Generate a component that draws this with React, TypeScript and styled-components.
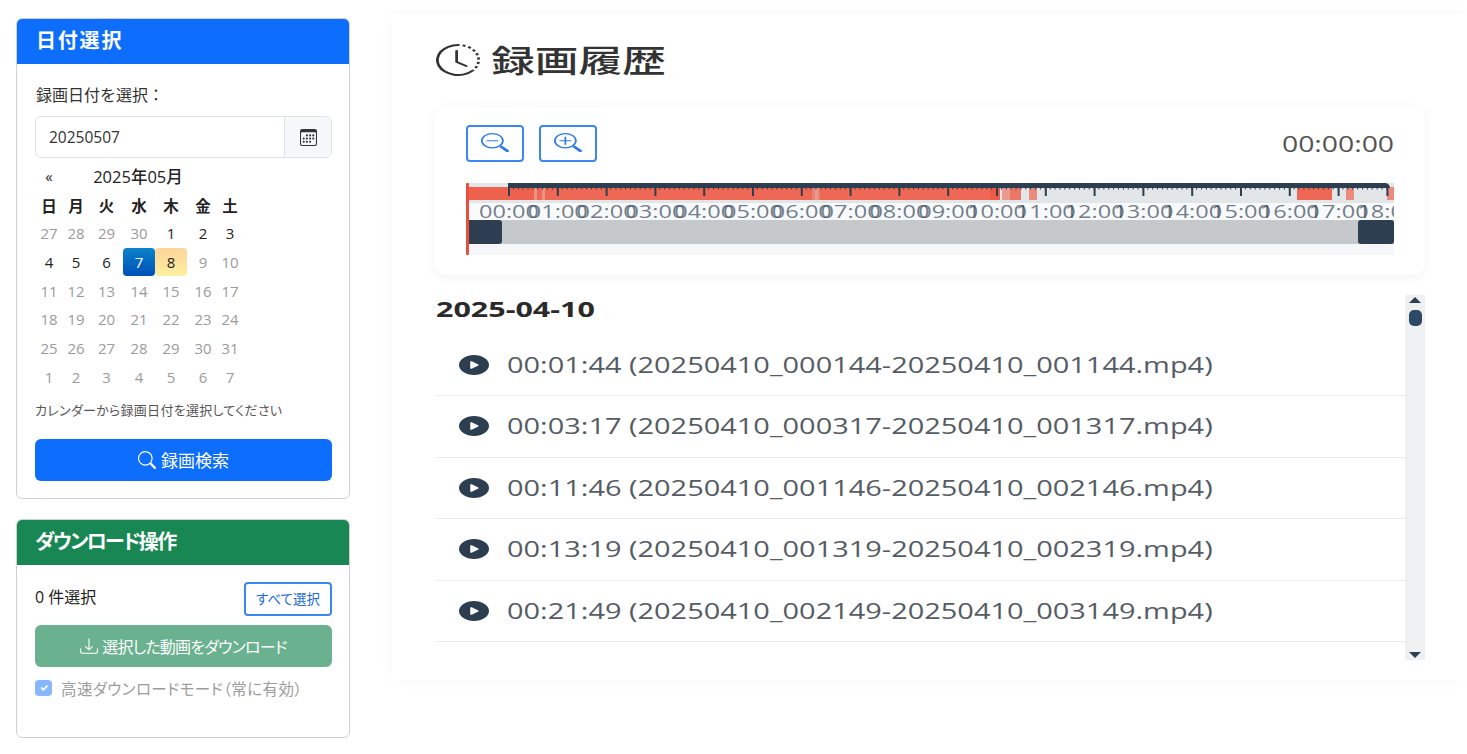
import React from "react";
import styled, { createGlobalStyle } from "styled-components";
import { BsCalendar3, BsClockHistory, BsDownload, BsPlayCircleFill, BsSearch, BsZoomIn, BsZoomOut } from "react-icons/bs";

const Global = createGlobalStyle`
  html, body { margin: 0; padding: 0; background: #fff; }
  body { font-family: "Open Sans", "Noto Sans CJK JP", sans-serif; color: #212529; overflow: hidden; }
`;

const Page = styled.div`
  display: flex; align-items: flex-start; width: 1467px; height: 754px; overflow: hidden;
`;
const Sidebar = styled.aside`
  display: flex; flex-direction: column; gap: 20px; width: 334px; flex: none; padding: 18px 0 0 16px;
`;
const Card = styled.section<{ $height: number }>`
  box-sizing: border-box; height: ${p => p.$height}px; border: 1px solid #cfd1d3; border-radius: 6px; overflow: hidden; background: #fff;
`;
const CardHeader = styled.h2<{ $bg: string; $inset: number; $spacing: number }>`
  margin: 0; height: 45px; box-sizing: border-box; padding-left: ${p => p.$inset}px; background: ${p => p.$bg}; color: #fff;
  font-size: 20px; line-height: 44px; font-weight: 700; font-feature-settings: "palt"; letter-spacing: ${p => p.$spacing}px;
`;
const CardBody = styled.div`
  padding: 0 17px 0 18px; display: flex; flex-direction: column;
`;
const FieldLabel = styled.label`
  margin-top: 19px; height: 24px; line-height: 24px; font-size: 16px; color: #333; padding-left: 1px;
`;
const InputGroup = styled.div`
  display: flex; margin-top: 9px; height: 42px; box-sizing: border-box; border: 1px solid #dee2e6; border-radius: 6px; overflow: hidden;
`;
const DateInput = styled.div`
  flex: 1; padding-left: 13px; font-size: 15.5px; line-height: 41px; color: #333;
`;
const Addon = styled.div`
  width: 46px; display: flex; align-items: center; justify-content: center; background: #f6f7f8; border-left: 1px solid #dee2e6; color: #333;
`;
const Calendar = styled.div`
  display: grid; grid-template-columns: 26px 28px 33px 32px 32px 32px 22px; grid-auto-rows: 28.7px; margin-top: 4px; margin-left: 1px; width: 205px;
`;
const MonthNav = styled.div`
  display: flex; align-items: center; justify-content: center; font-size: 15px; color: #222;
`;
const MonthTitle = styled(MonthNav)`
  grid-column: 2 / 8; font-size: 16.5px; font-weight: 500; padding-right: 27px;
`;
const Weekday = styled.div`
  display: flex; align-items: center; justify-content: center; font-size: 15.5px; font-weight: 600; color: #222;
`;
const Day = styled.div<{ $tone?: "muted" | "active" | "today" }>`
  display: flex; align-items: center; justify-content: center; font-size: 15px; border-radius: 4px; height: 28px;
  color: ${p => p.$tone === "muted" ? "#9b9b9b" : p.$tone === "active" ? "#fff" : "#222"};
  background: ${p => p.$tone === "active" ? "linear-gradient(#0a82c9, #0050b8)" : p.$tone === "today" ? "linear-gradient(#fdd49a, #fdf0a0)" : "transparent"};
`;
const Help = styled.p`
  margin: 8px 0 0; height: 20px; line-height: 20px; font-size: 13px; font-feature-settings: "palt"; color: #555; white-space: nowrap; letter-spacing: .28px;
`;
const PrimaryButton = styled.div`
  margin-top: 19px; height: 42px; border-radius: 6px; background: #0d6efd; color: #fff; display: flex; align-items: center; justify-content: center; gap: 5px; font-size: 17px;
`;
const SelectRow = styled.div`
  display: flex; align-items: flex-start; justify-content: space-between; margin-top: 17px; height: 34px;
`;
const Count = styled.span`
  font-size: 16px; line-height: 30px; color: #222;
`;
const OutlineSmall = styled.div`
  box-sizing: border-box; width: 88px; height: 34px; border: 2px solid #3b86f5; border-radius: 4px; color: #2468d8; font-size: 13.5px; line-height: 30px; text-align: center; font-feature-settings: "palt";
`;
const DownloadButton = styled.div`
  margin-top: 9px; height: 42px; border-radius: 6px; background: #6ab18f; color: #fff; display: flex; align-items: center; justify-content: center; gap: 4px; font-size: 16px; font-feature-settings: "palt"; letter-spacing: -.8px;
`;
const CheckRow = styled.div`
  display: flex; align-items: center; gap: 9px; margin-top: 12px; height: 18px; font-size: 15.5px; color: #9c9c9c; font-feature-settings: "palt"; white-space: nowrap; letter-spacing: .4px;
`;
const CheckBox = styled.span`
  width: 17px; height: 16px; flex: none; border-radius: 4px; background: #86b7fe; display: flex; align-items: center; justify-content: center;
`;
const Main = styled.main`
  box-sizing: border-box; width: 1075px; margin: 15px 0 0 42px; height: 665px; padding: 29px 42px 0; background: #fff; box-shadow: 0 0 16px rgba(0,0,0,.03); flex: none;
`;
const TitleRow = styled.div`
  display: flex; align-items: center; gap: 11px; height: 32px; padding-left: 2px; color: #333;
`;
const HistoryIcon = styled(BsClockHistory)`
  width: 44px; height: 32px; flex: none;
`;
const Title = styled.h1`
  margin: 0; font-size: 31px; line-height: 32px; font-weight: 500; color: #333; transform: scaleX(1.41); transform-origin: left center; white-space: nowrap;
`;
const TimelineCard = styled.section`
  margin-top: 31px; height: 168px; box-sizing: border-box; padding: 18px 31px 0 32px; border-radius: 12px; background: #fff; box-shadow: 0 2px 12px rgba(0,0,0,.05);
`;
const Toolbar = styled.div`
  display: flex; align-items: center; gap: 15px; height: 37px;
`;
const ZoomButton = styled.div`
  box-sizing: border-box; width: 58px; height: 37px; border: 2px solid #3b86f5; border-radius: 4px; display: flex; align-items: center; justify-content: center; color: #2f7be8;
`;
const ZoomOutIcon = styled(BsZoomOut)`
  width: 28px; height: 19px; margin-top: -3px;
`;
const ZoomInIcon = styled(BsZoomIn)`
  width: 28px; height: 19px; margin-top: -3px;
`;
const Clock = styled.span`
  margin-left: auto; font-size: 21px; color: #555; transform: scaleX(1.35); transform-origin: right center; padding-top: 1px;
`;
const Chart = styled.svg`
  display: block; margin-top: 21px;
`;
const AxisLabel = styled.text`
  font-family: "Open Sans", sans-serif; font-size: 18px; fill: #2c3e50; fill-opacity: .68;
`;
const ListArea = styled.div`
  display: flex; margin-top: 20px; height: 365px; margin-left: 2px;
`;
const List = styled.div`
  flex: 1; min-width: 0; overflow: hidden;
`;
const DateHeading = styled.h3`
  margin: 0; height: 39.5px; font-size: 21px; line-height: 29px; font-weight: 700; color: #2a2a2a; transform: scaleX(1.45); transform-origin: left center; white-space: nowrap;
`;
const Row = styled.div`
  box-sizing: border-box; height: 61.5px; display: flex; align-items: center; padding-left: 23px; gap: 18px; border-bottom: 1px solid #ececec; color: #2c3e50;
`;
const PlayIcon = styled(BsPlayCircleFill)`
  width: 30px; height: 20px; flex: none;
`;
const RowText = styled.span`
  font-size: 21px; color: #555c64; white-space: nowrap; transform: scaleX(1.378); transform-origin: left center;
`;
const ScrollTrack = styled.div`
  width: 20px; flex: none; background: #eff0f1; display: flex; flex-direction: column; align-items: center;
`;
const Arrow = styled.svg`
  display: block; flex: none;
`;
const Thumb = styled.div`
  width: 13px; height: 16px; margin-top: 5px; border-radius: 5px; background: #2c4a66; flex: none;
`;
const Spacer = styled.div`
  flex: 1;
`;

const weeks: [number, "muted" | "active" | "today" | undefined][] = [
  ...[27, 28, 29, 30].map(d => [d, "muted"] as [number, "muted"]),
  [1, undefined], [2, undefined], [3, undefined], [4, undefined], [5, undefined], [6, undefined],
  [7, "active"], [8, "today"],
  ...Array.from({ length: 23 }, (_, i) => [i + 9, "muted"] as [number, "muted"]),
  ...[1, 2, 3, 4, 5, 6, 7].map(d => [d, "muted"] as [number, "muted"]),
];

const segments: [number, number, number][] = [
  [469, 534, .95], [534, 537, .6], [537, 542, .9], [542, 545, .6], [545, 812, .9], [812, 815, .7], [815, 818, .55], [818, 820, .7], [820, 990, .9],
  [990, 1000, 1], [1002, 1010, .55], [1010, 1021, .8], [1029, 1037, .65], [1297, 1332, .9], [1346, 1354, .65], [1387, 1394, .65],
];

const rows = [
  "00:01:44 (20250410_000144-20250410_001144.mp4)",
  "00:03:17 (20250410_000317-20250410_001317.mp4)",
  "00:11:46 (20250410_001146-20250410_002146.mp4)",
  "00:13:19 (20250410_001319-20250410_002319.mp4)",
  "00:21:49 (20250410_002149-20250410_003149.mp4)",
];

const hours = Array.from({ length: 19 }, (_, i) => i);
const minor = Array.from({ length: 181 }, (_, i) => i);

function Timeline() {
  return (
    <Chart width={928} height={72} viewBox="0 0 928 72">
      <rect x={0} y={0} width={928} height={20} fill="#e3e6e8" />
      <rect x={0} y={20} width={928} height={17} fill="#f8f9fa" />
      <rect x={0} y={61} width={928} height={11} fill="#f5f6f8" />
      {segments.map(([a, b, o]) => (
        <rect key={a} x={a - 466} y={4} width={b - a} height={13} fill="#ee5a45" fillOpacity={o} />
      ))}
      <path d="M42 0H919a5 5 0 0 1 5 5H42Z" fill="#2c3e50" />
      {minor.map(i => (
        <rect key={i} x={42 + i * 4.88} y={5} width={1} height={1.5} fill="#2c3e50" />
      ))}
      {hours.map(i => (
        <rect key={i} x={42 + i * 48.8} y={4} width={2} height={9} fill="#2c3e50" />
      ))}
      {hours.map(i => (
        <AxisLabel key={i} x={13 + i * 48.8} y={35} textLength={60} lengthAdjust="spacingAndGlyphs">
          {String(i).padStart(2, "0")}:00
        </AxisLabel>
      ))}
      <rect x={0} y={37} width={928} height={24} fill="#c5c9cc" />
      <rect x={0} y={37} width={36} height={24} rx={3} fill="#2c3e50" />
      <rect x={892} y={37} width={36} height={24} rx={3} fill="#2c3e50" />
      <rect x={0} y={0} width={3} height={72} rx={1} fill="#e8503e" />
    </Chart>
  );
}

export default function App() {
  return (
    <>
      <Global />
      <Page>
        <Sidebar>
          <Card $height={481}>
            <CardHeader $bg="#0d6efd" $inset={19} $spacing={1.8}>日付選択</CardHeader>
            <CardBody>
              <FieldLabel>録画日付を選択：</FieldLabel>
              <InputGroup>
                <DateInput>20250507</DateInput>
                <Addon><BsCalendar3 size={17} /></Addon>
              </InputGroup>
              <Calendar>
                <MonthNav>«</MonthNav>
                <MonthTitle>2025年05月</MonthTitle>
                {["日", "月", "火", "水", "木", "金", "土"].map(w => <Weekday key={w}>{w}</Weekday>)}
                {weeks.map(([d, tone], i) => <Day key={i} $tone={tone}>{d}</Day>)}
              </Calendar>
              <Help>カレンダーから録画日付を選択してください</Help>
              <PrimaryButton><BsSearch size={18} />録画検索</PrimaryButton>
            </CardBody>
          </Card>
          <Card $height={219}>
            <CardHeader $bg="#198754" $inset={18} $spacing={-1.7}>ダウンロード操作</CardHeader>
            <CardBody>
              <SelectRow>
                <Count>0 件選択</Count>
                <OutlineSmall>すべて選択</OutlineSmall>
              </SelectRow>
              <DownloadButton><BsDownload size={18} />選択した動画をダウンロード</DownloadButton>
              <CheckRow>
                <CheckBox>
                  <svg width="12" height="12" viewBox="0 0 20 20"><path fill="none" stroke="#fff" strokeWidth="3" strokeLinecap="round" strokeLinejoin="round" d="M6 10l3 3 6-6" /></svg>
                </CheckBox>
                高速ダウンロードモード（常に有効）
              </CheckRow>
            </CardBody>
          </Card>
        </Sidebar>
        <Main>
          <TitleRow>
            <HistoryIcon preserveAspectRatio="none" />
            <Title>録画履歴</Title>
          </TitleRow>
          <TimelineCard>
            <Toolbar>
              <ZoomButton><ZoomOutIcon preserveAspectRatio="none" /></ZoomButton>
              <ZoomButton><ZoomInIcon preserveAspectRatio="none" /></ZoomButton>
              <Clock>00:00:00</Clock>
            </Toolbar>
            <Timeline />
          </TimelineCard>
          <ListArea>
            <List>
              <DateHeading>2025-04-10</DateHeading>
              {rows.map(r => (
                <Row key={r}>
                  <PlayIcon preserveAspectRatio="none" />
                  <RowText>{r}</RowText>
                </Row>
              ))}
            </List>
            <ScrollTrack>
              <Arrow width="14" height="10" viewBox="0 0 14 10"><path d="M7 2L13 8H1Z" fill="#2c3e50" /></Arrow>
              <Thumb />
              <Spacer />
              <Arrow width="14" height="10" viewBox="0 0 14 10"><path d="M1 2H13L7 8Z" fill="#2c3e50" /></Arrow>
            </ScrollTrack>
          </ListArea>
        </Main>
      </Page>
    </>
  );
}
